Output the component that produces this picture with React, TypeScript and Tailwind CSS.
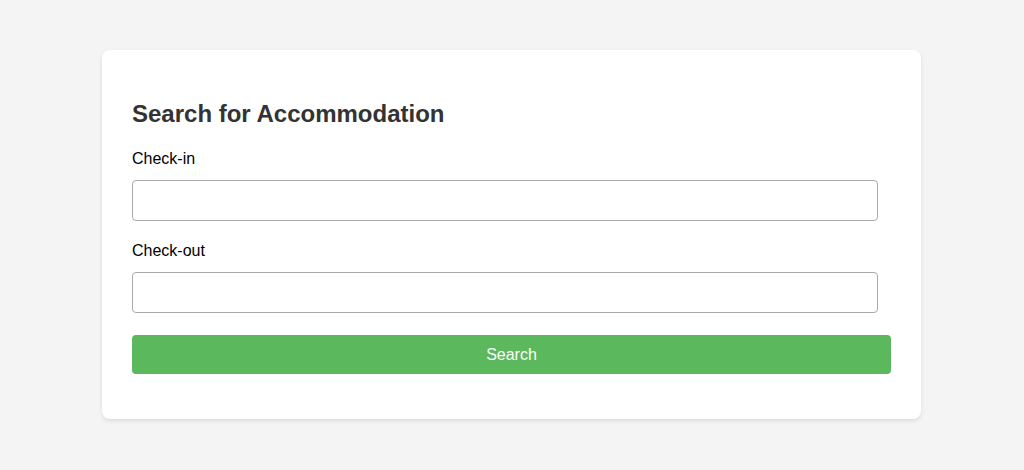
export default function App() {
  return (
    <div
      className="min-h-[470px] bg-[#f4f4f4] pt-[50px]"
      style={{ fontFamily: '"Liberation Sans", Arial, sans-serif' }}
    >
      <div className="ml-[102px] w-[819px] rounded-lg bg-white px-[30px] pt-[30px] pb-[45px] shadow-[0_2px_4px_rgba(0,0,0,0.1)]">
        <h2 className="mt-5 mb-[22px] text-[24px] leading-[28px] font-bold text-[#333]">
          Search for Accommodation
        </h2>

        <label className="block text-[16px] leading-[18px] text-black">Check-in</label>
        <input
          type="text"
          className="mt-3 block h-[41px] w-[746px] rounded border border-[#aaa] bg-white px-2"
        />

        <label className="mt-[21px] block text-[16px] leading-[18px] text-black">Check-out</label>
        <input
          type="text"
          className="mt-3 block h-[41px] w-[746px] rounded border border-[#aaa] bg-white px-2"
        />

        <button className="mt-[22px] block h-[39px] w-full rounded bg-[#5cb85c] text-[16px] text-white">
          Search
        </button>
      </div>
    </div>
  );
}
